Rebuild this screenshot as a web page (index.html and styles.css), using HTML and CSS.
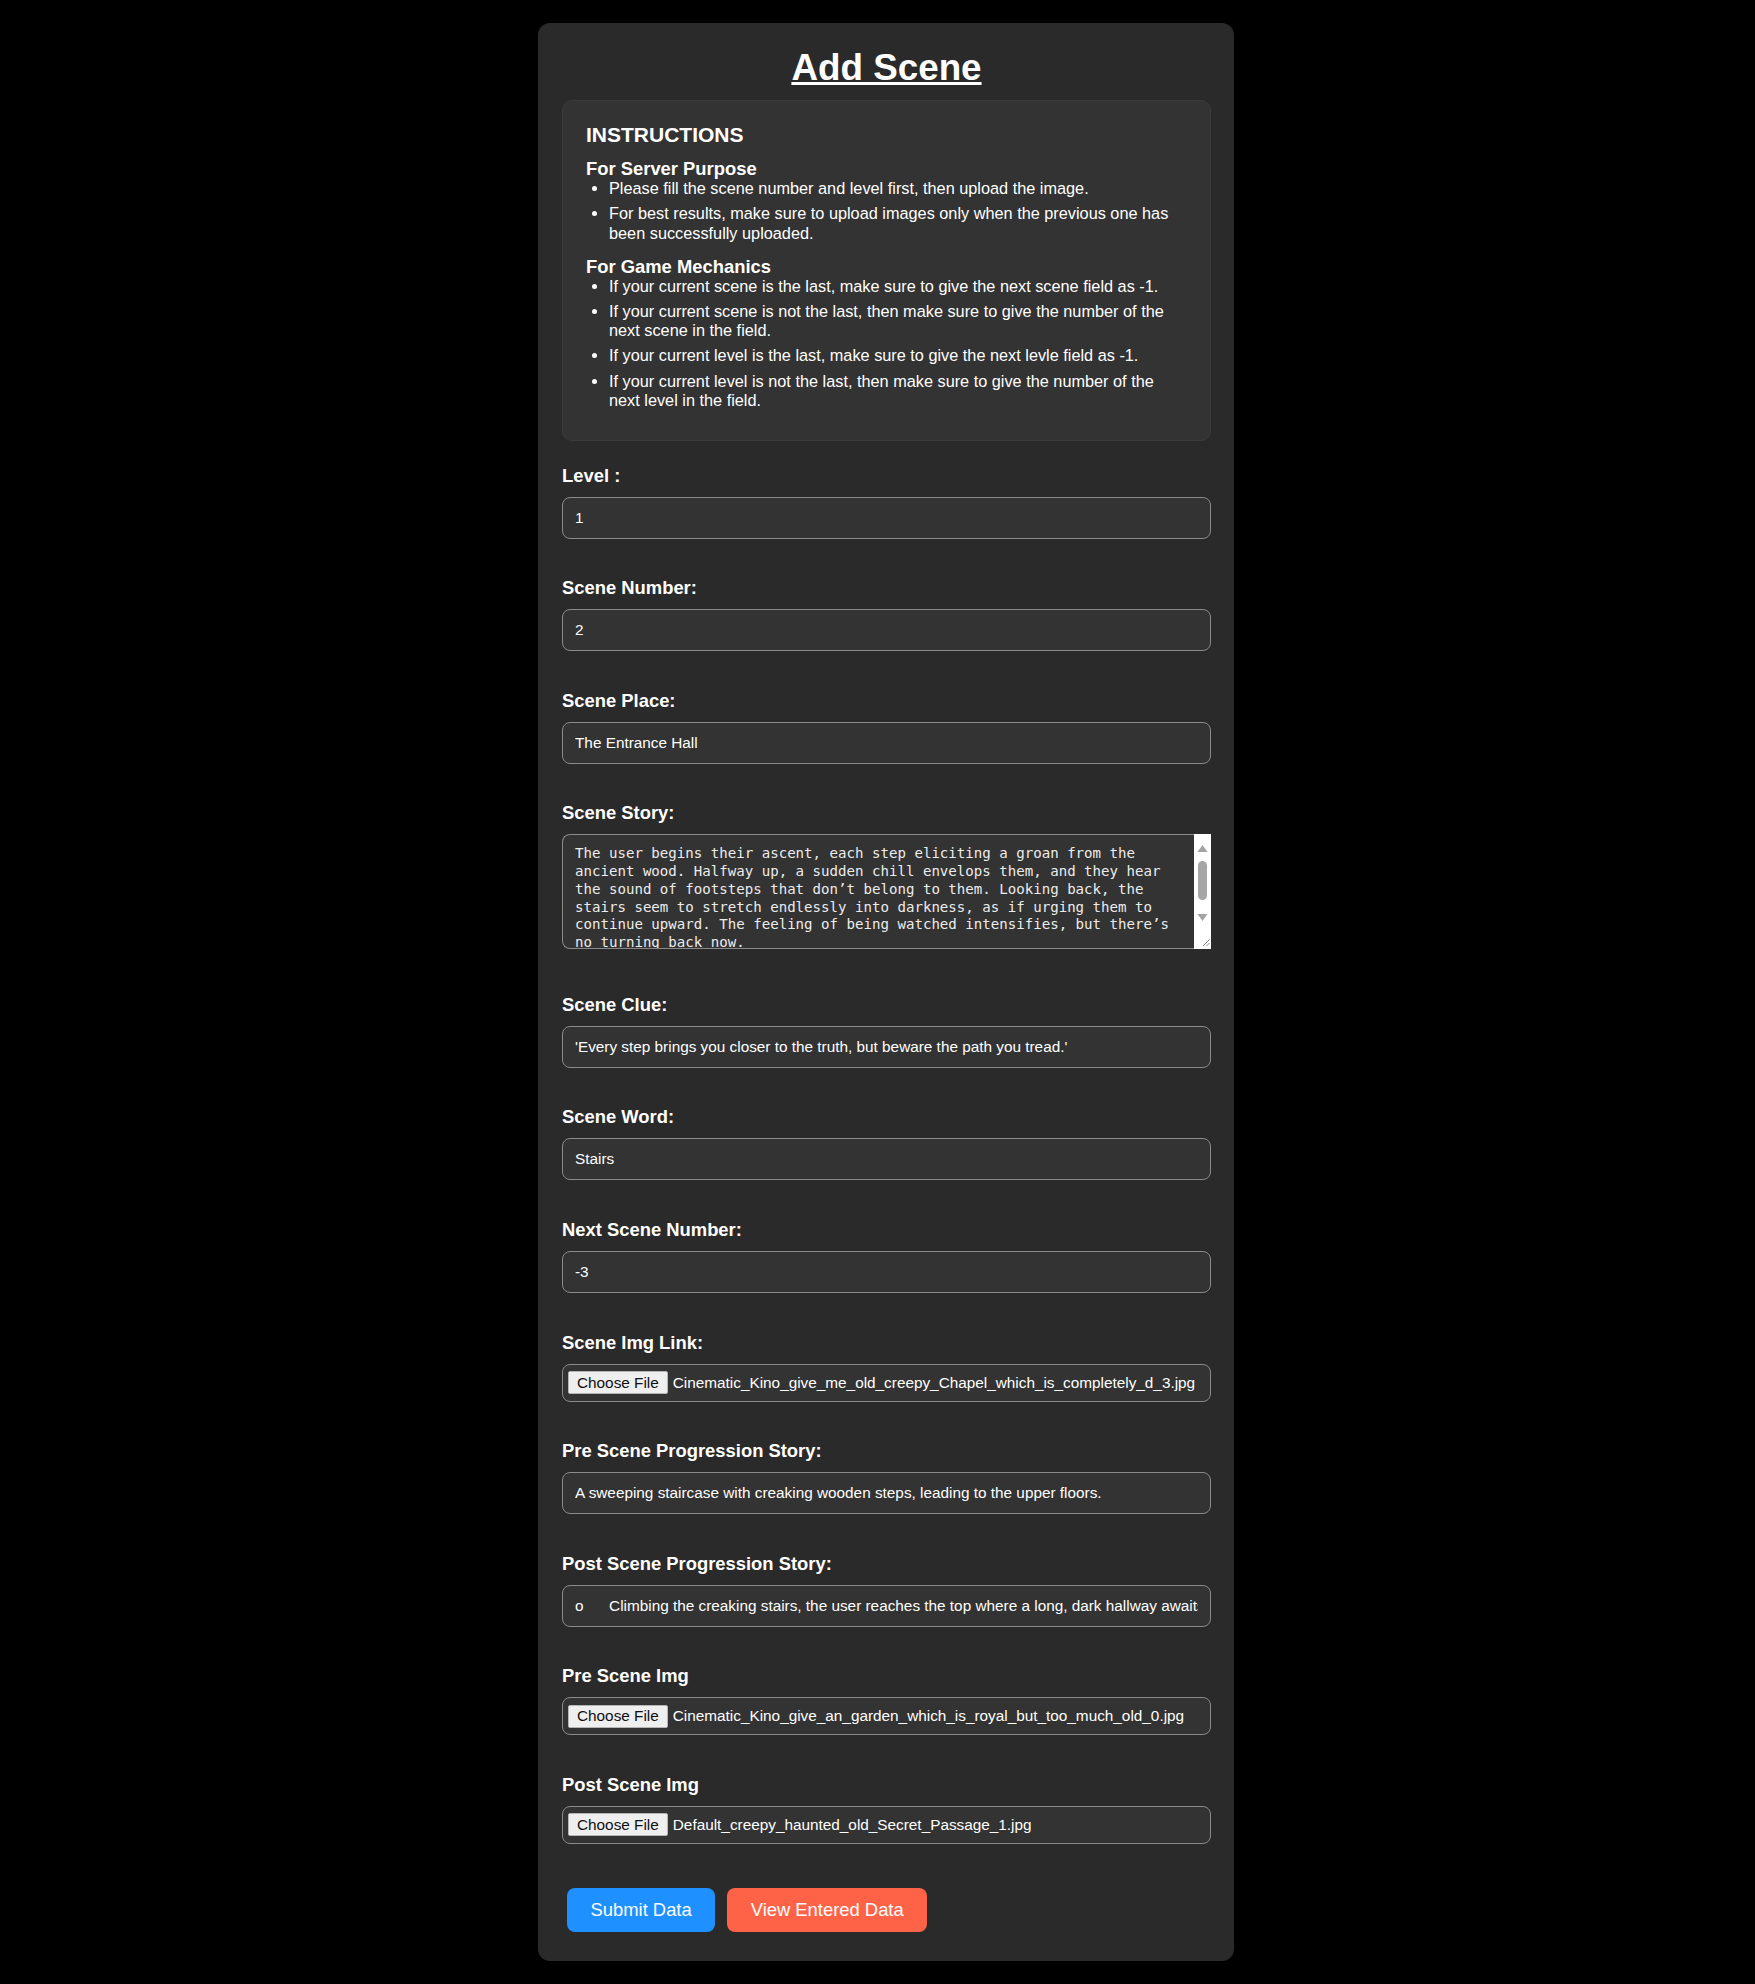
FILE: index.html
```html
<!DOCTYPE html>
<html lang="en">
<head>
<meta charset="utf-8">
<title>Add Scene</title>
<link rel="stylesheet" href="styles.css">
</head>
<body>
<main class="card">
  <h1 class="title">Add Scene</h1>

  <section class="instructions">
    <h3 class="ins-title">INSTRUCTIONS</h3>
    <h4 class="ins-sub">For Server Purpose</h4>
    <ul class="ins-list">
      <li>Please fill the scene number and level first, then upload the image.</li>
      <li>For best results, make sure to upload images only when the previous one has been successfully uploaded.</li>
    </ul>
    <h4 class="ins-sub">For Game Mechanics</h4>
    <ul class="ins-list">
      <li>If your current scene is the last, make sure to give the next scene field as -1.</li>
      <li>If your current scene is not the last, then make sure to give the number of the next scene in the field.</li>
      <li>If your current level is the last, make sure to give the next levle field as -1.</li>
      <li>If your current level is not the last, then make sure to give the number of the next level in the field.</li>
    </ul>
  </section>

  <form class="form">
    <div class="field">
      <label class="label" for="level">Level :</label>
      <input class="input" id="level" type="text" value="1">
    </div>
    <div class="field">
      <label class="label" for="scene-number">Scene Number:</label>
      <input class="input" id="scene-number" type="text" value="2">
    </div>
    <div class="field">
      <label class="label" for="scene-place">Scene Place:</label>
      <input class="input" id="scene-place" type="text" value="The Entrance Hall">
    </div>
    <div class="field field-story">
      <label class="label" for="scene-story">Scene Story:</label>
      <div class="story-box">
        <textarea class="story-text" id="scene-story">The user begins their ascent, each step eliciting a groan from the ancient wood. Halfway up, a sudden chill envelops them, and they hear the sound of footsteps that don’t belong to them. Looking back, the stairs seem to stretch endlessly into darkness, as if urging them to continue upward. The feeling of being watched intensifies, but there’s no turning back now.</textarea>
        <svg class="scrollbar" width="17" height="115" viewBox="0 0 17 115" aria-hidden="true">
          <rect x="0" y="0" width="17" height="115" fill="#ffffff"/>
          <polygon points="3.5,18 13.5,18 8.5,11" fill="#a3a3a3"/>
          <rect x="4" y="27" width="9" height="39" rx="4.5" fill="#a6a6a6"/>
          <polygon points="3.5,80 13.5,80 8.5,87" fill="#a3a3a3"/>
          <line x1="15.5" y1="105.5" x2="9" y2="112" stroke="#8a8a8a" stroke-width="1"/>
          <line x1="15.5" y1="109" x2="12.5" y2="112" stroke="#8a8a8a" stroke-width="1"/>
        </svg>
      </div>
    </div>
    <div class="field">
      <label class="label" for="scene-clue">Scene Clue:</label>
      <input class="input" id="scene-clue" type="text" value="'Every step brings you closer to the truth, but beware the path you tread.'">
    </div>
    <div class="field">
      <label class="label" for="scene-word">Scene Word:</label>
      <input class="input" id="scene-word" type="text" value="Stairs">
    </div>
    <div class="field">
      <label class="label" for="next-scene">Next Scene Number:</label>
      <input class="input" id="next-scene" type="text" value="-3">
    </div>
    <div class="field">
      <span class="label">Scene Img Link:</span>
      <div class="file">
        <span class="file-btn">Choose File</span>
        <span class="file-name">Cinematic_Kino_give_me_old_creepy_Chapel_which_is_completely_d_3.jpg</span>
      </div>
    </div>
    <div class="field">
      <label class="label" for="pre-story">Pre Scene Progression Story:</label>
      <input class="input" id="pre-story" type="text" value="A sweeping staircase with creaking wooden steps, leading to the upper floors.">
    </div>
    <div class="field">
      <label class="label" for="post-story">Post Scene Progression Story:</label>
      <input class="input" id="post-story" type="text" value="o      Climbing the creaking stairs, the user reaches the top where a long, dark hallway awaits, lined with portraits whose eyes seem to follow every move.">
    </div>
    <div class="field">
      <span class="label">Pre Scene Img</span>
      <div class="file">
        <span class="file-btn">Choose File</span>
        <span class="file-name">Cinematic_Kino_give_an_garden_which_is_royal_but_too_much_old_0.jpg</span>
      </div>
    </div>
    <div class="field">
      <span class="label">Post Scene Img</span>
      <div class="file">
        <span class="file-btn">Choose File</span>
        <span class="file-name">Default_creepy_haunted_old_Secret_Passage_1.jpg</span>
      </div>
    </div>
    <div class="actions">
      <button class="btn btn-submit" type="button">Submit Data</button>
      <button class="btn btn-view" type="button">View Entered Data</button>
    </div>
  </form>
</main>
</body>
</html>
```

FILE: styles.css
```css
* {
  box-sizing: border-box;
}

html,
body {
  margin: 0;
}

body {
  background: #000000;
  color: #ffffff;
  font-family: "Liberation Sans", Arial, sans-serif;
  padding: 23px 0 24px 17px;
}

.card {
  width: 696px;
  margin: 0 auto;
  background: #2a2a2a;
  border-radius: 12px;
  padding: 23.5px 23px 23.5px 24px;
}

.title {
  margin: 0 0 11.5px;
  font-size: 36.8px;
  line-height: 42px;
  font-weight: bold;
  text-align: center;
  text-decoration: underline;
  color: #ffffff;
}

/* Instructions */
.instructions {
  background: #333333;
  border: 1px solid #3b3b3b;
  border-radius: 10px;
  padding: 21.5px 24px 24px 23px;
  margin-bottom: 23.5px;
}

.ins-title {
  margin: 0 0 11.8px;
  font-size: 21px;
  line-height: 24px;
  font-weight: bold;
}

.ins-sub {
  margin: 0;
  font-size: 18.4px;
  line-height: 21px;
  font-weight: bold;
}

.ins-list {
  margin: 0 0 12.5px;
  padding-left: 23px;
  font-size: 16.3px;
  line-height: 19.4px;
}

.ins-list:last-child {
  margin-bottom: 0;
}

.ins-list li {
  margin-bottom: 5.75px;
}

/* Form */
.form {
  margin: 0;
}

.field {
  margin-bottom: 38.6px;
}

.field-story {
  margin-bottom: 44.3px;
}

.label {
  display: block;
  font-size: 18.4px;
  line-height: 21px;
  font-weight: bold;
  margin-bottom: 11px;
  color: #ffffff;
}

.input {
  display: block;
  width: 100%;
  height: 42px;
  padding: 0 12px;
  background: #333333;
  border: 1px solid #8a8a8a;
  border-radius: 8px;
  color: #ffffff;
  font-family: "Liberation Sans", Arial, sans-serif;
  font-size: 15.33px;
  outline: none;
}

/* Story textarea with scrollbar */
.story-box {
  display: flex;
  height: 115px;
}

.story-text {
  flex: 1;
  height: 115px;
  margin: 0;
  padding: 10px 12px;
  background: #333333;
  border: 1px solid #8a8a8a;
  border-right: none;
  border-radius: 8px 0 0 8px;
  color: #ececec;
  font-family: "DejaVu Sans Mono", "Liberation Mono", monospace;
  font-size: 14.1px;
  line-height: 17.7px;
  resize: none;
  overflow: hidden;
  outline: none;
}

.scrollbar {
  display: block;
  flex: 0 0 17px;
}

/* File inputs */
.file {
  display: flex;
  align-items: center;
  height: 38px;
  padding: 0 5px;
  background: #333333;
  border: 1px solid #8a8a8a;
  border-radius: 8px;
  overflow: hidden;
}

.file-btn {
  flex: 0 0 auto;
  display: flex;
  align-items: center;
  height: 23px;
  padding: 0 8px;
  background: #efefef;
  border: 1px solid #b5b5b5;
  border-radius: 2px;
  color: #111111;
  font-size: 15.33px;
}

.file-name {
  margin-left: 5px;
  font-size: 15.33px;
  color: #ffffff;
  white-space: nowrap;
}

/* Buttons */
.actions {
  display: flex;
  gap: 12px;
  margin: 44.5px 0 5px 5px;
}

.btn {
  height: 44px;
  padding: 0 23.5px;
  border: none;
  border-radius: 8px;
  color: #ffffff;
  font-family: "Liberation Sans", Arial, sans-serif;
  font-size: 18.4px;
  cursor: pointer;
}

.btn-submit {
  background: #1e90ff;
}

.btn-view {
  background: #ff6347;
}
```
